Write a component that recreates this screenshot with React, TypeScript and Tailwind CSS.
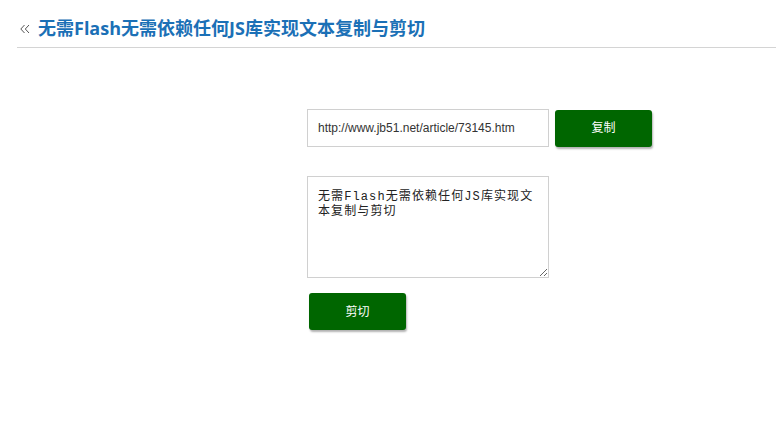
import React from 'react';

const App: React.FC = () => {
  const text = '无需Flash无需依赖任何JS库实现文本复制与剪切';

  return (
    <div className="min-h-[425px] w-[776px] bg-white" style={{ fontFamily: '"Liberation Sans", "Noto Sans CJK SC", sans-serif' }}>
      {/* title */}
      <div className="ml-[17px] border-b border-[#d4d4d4] pt-[15px] pb-[6px]">
        <h1 className="flex items-center text-[18px] leading-[26px] font-bold text-[#1b70b6]">
          <svg width="10" height="10" viewBox="0 0 10 10" className="ml-[3px] mr-[8px] mt-[2px]" fill="none" stroke="#555" strokeWidth="1">
            <path d="M4.5 1 L0.8 5 L4.5 9" />
            <path d="M9 1 L5.3 5 L9 9" />
          </svg>
          <span style={{ fontFamily: '"Open Sans", "Noto Sans CJK SC", sans-serif' }}>{text}</span>
        </h1>
      </div>

      <div className="pl-[307px] pt-[61px]">
        <div className="flex items-center gap-[6px]">
          <input
            readOnly
            value="http://www.jb51.net/article/73145.htm"
            className="h-[38px] w-[242px] border border-[#d0d0d0] px-[10px] text-[12px] text-[#333] outline-none"
          />
          <button className="h-[37px] w-[97px] rounded-[3px] bg-[#006600] text-[12px] text-white shadow-[1px_2px_2px_rgba(0,0,0,0.3)]">
            复制
          </button>
        </div>

        <textarea
          readOnly
          defaultValue={text}
          className="mt-[29px] block h-[102px] w-[242px] resize border border-[#d0d0d0] px-[10px] pt-[13px] text-[12px] leading-[15px] tracking-[1.1px] text-[#222] outline-none"
          style={{ fontFamily: '"Liberation Mono", "Noto Sans CJK SC", monospace' }}
        />

        <button className="ml-[2px] mt-[15px] h-[37px] w-[97px] rounded-[3px] bg-[#006600] text-[12px] text-white shadow-[1px_2px_2px_rgba(0,0,0,0.3)]">
          剪切
        </button>
      </div>
    </div>
  );
};

export default App;
